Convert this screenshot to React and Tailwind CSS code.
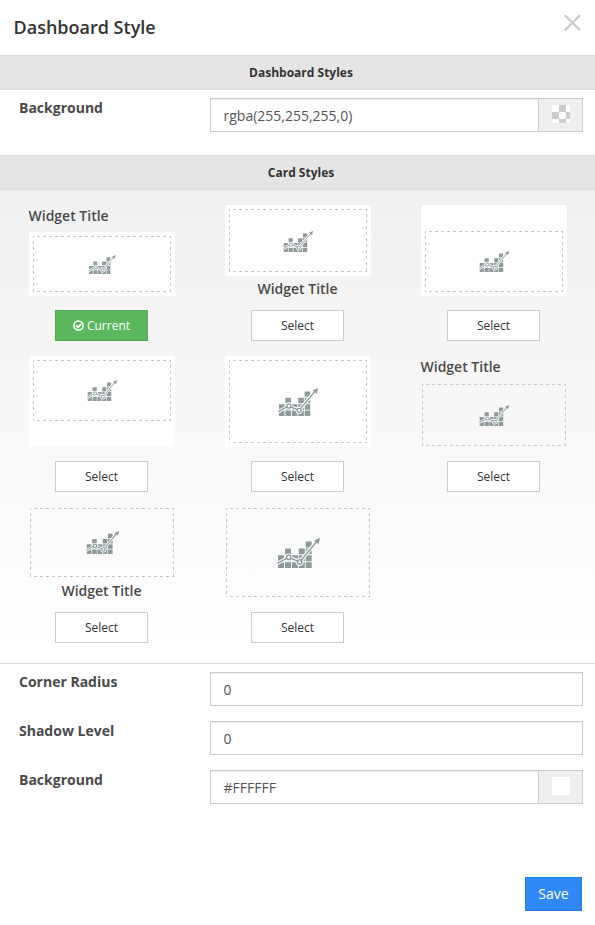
import React from "react";

function ChartIcon({ className }) {
  return (
    <svg viewBox="0 0 43 30" className={className} fill="#8f999b">
      <defs>
        <mask id="trend-halo" maskUnits="userSpaceOnUse" x="0" y="0" width="43" height="30">
          <rect width="43" height="30" fill="#fff" />
          <path d="M-1 26 L11.7 19.3 L22.7 24 L40 3" fill="none" stroke="#000" strokeWidth="3.6" />
          <circle cx="11.7" cy="19.3" r="3.9" fill="#000" />
          <circle cx="22.7" cy="24" r="3.9" fill="#000" />
        </mask>
      </defs>
      <g mask="url(#trend-halo)">
        <path d="M1 17.3h6v6h-6z M1 24.2h6v5.8h-6z" />
        <path d="M8 10.4h6v5.9h-6z M8 17.3h6v6h-6z M8 24.2h6v5.8h-6z" />
        <path d="M14.9 17.3h6v6h-6z M14.9 24.2h6v5.8h-6z" />
        <path d="M21.8 10.4h6v5.9h-6z M21.8 17.3h6v6h-6z M21.8 24.2h6v5.8h-6z" />
        <path d="M28.7 3.6h6v5.8h-6z M28.7 10.4h6v5.9h-6z M28.7 17.3h6v6h-6z M28.7 24.2h6v5.8h-6z" />
      </g>
      <g fill="none" stroke="#8f999b" strokeWidth="1.4">
        <path d="M0.3 25.3 L9.6 20.3 M13.8 20.2 L20.6 23.1 M24.2 22.2 L40 3.2" />
        <circle cx="11.7" cy="19.3" r="2.2" />
        <circle cx="22.7" cy="24" r="2.2" />
      </g>
      <path d="M43 0 L41.6 6.2 L37.2 2.6 Z" />
    </svg>
  );
}

function CheckCircle() {
  return (
    <svg viewBox="0 0 12 12" className="mr-[3px] h-[11px] w-[11px]" fill="none" stroke="#fff">
      <circle cx="6" cy="6" r="5" strokeWidth="1.7" />
      <path d="M3.5 5.8 L5.5 7.8 L8.8 4.5" strokeWidth="1.9" />
    </svg>
  );
}

function Band({ children }) {
  return (
    <div className="h-[35px] border-y border-[#dcdcdc] bg-[#e5e5e5] pl-[7px] text-center text-xs leading-[33px] font-bold text-[#333]">
      {children}
    </div>
  );
}

function Field({ label, value, swatch }) {
  return (
    <div className="flex h-[34px] pr-3 pl-[19px]">
      <label className="w-[191px] text-sm leading-5 font-bold text-[#4a4a4a]">{label}</label>
      <div className="flex flex-1 border border-[#ccc]">
        <div className="flex-1 bg-white pt-[1px] pl-[12.5px] text-sm leading-8 text-[#555] shadow-[inset_0_1px_1px_rgba(0,0,0,0.075)]">
          {value}
        </div>
        {swatch && (
          <div className="w-11 border-l border-[#ccc] bg-[#eee] pt-1.5 pl-[13px]">{swatch}</div>
        )}
      </div>
    </div>
  );
}

function AlphaSwatch() {
  return (
    <svg viewBox="0 0 18 18" className="h-[18px] w-[18px]">
      <rect width="18" height="18" fill="#fff" />
      <path d="M7 0h7v18h-7z M0 7h18v7h-18z" fill="#ccc" />
      <rect x="7" y="7" width="7" height="7" rx="1.6" fill="#fff" />
    </svg>
  );
}

function WidgetTitle({ className }) {
  return <div className={`text-sm leading-5 font-semibold text-[#4a4a4a] ${className}`}>Widget Title</div>;
}

// One-pixel frame with three-pixel dashes and three-pixel gaps.
const dashX = "bg-[repeating-linear-gradient(to_right,#c8c8c8_0_1px,transparent_1px_4px,#c8c8c8_4px_6px)]";
const dashY = "bg-[repeating-linear-gradient(to_bottom,#c8c8c8_0_1px,transparent_1px_4px,#c8c8c8_4px_6px)]";

function Preview({ icon, className }) {
  return (
    <div className={`flex flex-col ${className}`}>
      <div className={`h-px shrink-0 ${dashX}`} />
      <div className="flex flex-1 items-stretch">
        <div className={`w-px shrink-0 ${dashY}`} />
        <div className="flex flex-1 items-center justify-center">
          <ChartIcon className={icon} />
        </div>
        <div className={`w-px shrink-0 ${dashY}`} />
      </div>
      <div className={`h-px shrink-0 ${dashX}`} />
    </div>
  );
}

const cards = [
  {
    current: true,
    body: (
      <>
        <WidgetTitle className="-ml-[0.5px] h-[27px] pt-[1px]" />
        <div className="h-16 bg-white p-1">
          <Preview className="h-full" icon="h-[19px] w-[28px]" />
        </div>
      </>
    ),
  },
  {
    body: (
      <>
        <div className="h-[71px] bg-white p-1">
          <Preview className="h-full" icon="mt-[2px] h-[21px] w-[30px]" />
        </div>
        <WidgetTitle className="pt-[3px] pr-[1px] text-center" />
      </>
    ),
  },
  {
    body: (
      <div className="h-full bg-white px-1 pt-[26px] pb-1">
        <Preview className="h-full" icon="h-[21px] w-[30px]" />
      </div>
    ),
  },
  {
    body: (
      <div className="h-full bg-white px-1 pt-1 pb-[26px]">
        <Preview className="h-full" icon="h-[21px] w-[30px]" />
      </div>
    ),
  },
  {
    body: (
      <div className="h-full bg-white p-1">
        <Preview className="h-full" icon="h-[28px] w-[40px]" />
      </div>
    ),
  },
  {
    body: (
      <>
        <WidgetTitle className="-ml-[0.5px] h-7 pt-[1px]" />
        <Preview className="mx-px h-[62px]" icon="h-[21px] w-[30px]" />
      </>
    ),
  },
  {
    body: (
      <>
        <Preview className="mx-px mt-px h-[69px]" icon="h-[23px] w-[33px]" />
        <WidgetTitle className="pt-[4px] pr-[1px] text-center" />
      </>
    ),
  },
  {
    body: <Preview className="mx-px mt-px h-[89px]" icon="h-[30px] w-[43px]" />,
  },
];

function Card({ card }) {
  return (
    <div className="h-[151px] w-[146px]">
      <div className="flow-root h-[91px]">{card.body}</div>
      {card.current ? (
        <button className="mt-[14px] ml-[26px] flex h-[31px] w-[93px] items-center justify-center border border-[#4cae4c] bg-[#5cb85c] text-xs text-white">
          <CheckCircle />
          Current
        </button>
      ) : (
        <button className="mt-[14px] ml-[26px] flex h-[31px] w-[93px] items-center justify-center border border-[#ccc] bg-white text-xs text-[#333]">
          Select
        </button>
      )}
    </div>
  );
}

export default function App() {
  return (
    <div className="h-[925px] w-[595px] overflow-hidden bg-white font-['Open_Sans',sans-serif]">
      <header className="flex h-[55px] justify-between pr-[14px] pl-[13.5px]">
        <h1 className="pt-[14px] text-lg leading-[26px] font-semibold text-[#333]">Dashboard Style</h1>
        <svg viewBox="0 0 17 17" className="mt-[14px] h-[17px] w-[17px]" stroke="#c8c8c8" strokeWidth="2.1" strokeLinecap="round">
          <path d="M1.5 1.8 L15.5 15.8 M15.5 1.8 L1.5 15.8" />
        </svg>
      </header>
      <Band>Dashboard Styles</Band>
      <div className="h-[65px] pt-2">
        <Field label="Background" value="rgba(255,255,255,0)" swatch={<AlphaSwatch />} />
      </div>
      <Band>Card Styles</Band>
      <div className="h-[474px] border-b border-[#dcdcdc] bg-linear-to-b from-[#f1f1f1] to-white pt-[15px] pl-[29px]">
        <div className="grid grid-cols-[146px_146px_146px] gap-x-[50px]">
          {cards.map((card, i) => (
            <Card key={i} card={card} />
          ))}
        </div>
      </div>
      <div className="flex flex-col gap-[15px] pt-2">
        <Field label="Corner Radius" value="0" />
        <Field label="Shadow Level" value="0" />
        <Field label="Background" value="#FFFFFF" swatch={<div className="h-[18px] w-[18px] bg-white" />} />
      </div>
      <div className="flex justify-end pt-[73px] pr-[13px]">
        <button className="h-[34px] w-[57px] border border-[#1f7ff3] bg-[#3088f7] text-sm text-white">Save</button>
      </div>
    </div>
  );
}
